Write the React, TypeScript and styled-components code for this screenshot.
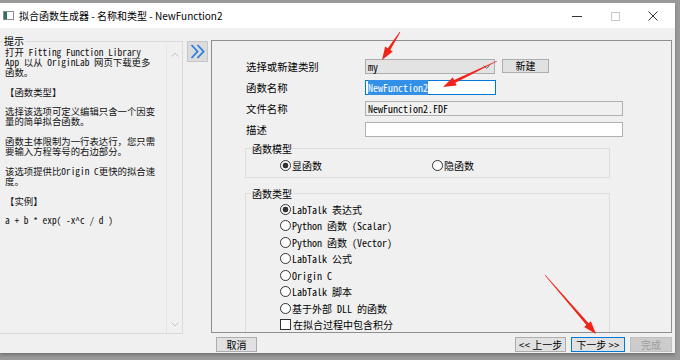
import styled, { createGlobalStyle } from 'styled-components';

const MONO = `"Noto Sans Mono CJK SC", "Liberation Mono", "Noto Sans CJK SC", monospace`;
const UI = `"Noto Sans CJK SC", "Liberation Sans", sans-serif`;

const GlobalStyle = createGlobalStyle`
  html, body { margin: 0; padding: 0; }
  body { width: 680px; height: 360px; overflow: hidden; background: #9a9a9a; }
`;

const helpLines = [
  '打开 Fitting Function Library',
  'App 以从 OriginLab 网页下载更多',
  '函数。',
  '',
  '【函数类型】',
  '',
  '选择该选项可定义编辑只含一个因变',
  '量的简单拟合函数。',
  '',
  '函数主体限制为一行表达行，您只需',
  '要输入方程等号的右边部分。',
  '',
  '该选项提供比Origin C更快的拟合速',
  '度。',
  '',
  '【实例】',
  '',
  'a + b * exp( -x^c / d )',
];

const funcTypes = [
  'LabTalk 表达式',
  'Python 函数 (Scalar)',
  'Python 函数 (Vector)',
  'LabTalk 公式',
  'Origin C',
  'LabTalk 脚本',
  '基于外部 DLL 的函数',
];

// red annotation arrows drawn over the dialog
const arrows = [
  { x1: 400, y1: 32, x2: 382, y2: 60 },
  { x1: 497, y1: 61, x2: 443, y2: 87 },
  { x1: 545, y1: 275, x2: 596, y2: 334 },
];

const arrowPoints = (x1: number, y1: number, x2: number, y2: number) => {
  const dx = x2 - x1;
  const dy = y2 - y1;
  const len = Math.hypot(dx, dy);
  const ux = dx / len;
  const uy = dy / len;
  const nx = -uy;
  const ny = ux;
  const head = 13;
  const hw = 4.5;
  const sw = 1.5;
  const bx = x2 - ux * head;
  const by = y2 - uy * head;
  const pts = [
    [x1 + nx * 0.3, y1 + ny * 0.3],
    [bx + nx * sw, by + ny * sw],
    [bx + nx * hw, by + ny * hw],
    [x2, y2],
    [bx - nx * hw, by - ny * hw],
    [bx - nx * sw, by - ny * sw],
    [x1 - nx * 0.3, y1 - ny * 0.3],
  ];
  return pts.map(p => p.map(v => v.toFixed(1)).join(',')).join(' ');
};

export default function App() {
  return (
    <Page>
      <GlobalStyle />
      <Window>
        <TitleBar>
          <svg width="11" height="9" viewBox="0 0 11 9" style={{ marginRight: 5 }}>
            <rect x="0.5" y="0.5" width="10" height="8" fill="#fff" stroke="#8a8a8a" />
            <rect x="1" y="1" width="3" height="7" fill="#2f6f6a" />
          </svg>
          <TitleText>拟合函数生成器 - 名称和类型 - NewFunction2</TitleText>
          <ControlButton>
            <svg width="10" height="10" viewBox="0 0 10 10">
              <line x1="0" y1="5.5" x2="10" y2="5.5" stroke="#333" strokeWidth="1" />
            </svg>
          </ControlButton>
          <ControlButton>
            <svg width="10" height="10" viewBox="0 0 10 10">
              <rect x="1.5" y="1.5" width="8" height="8" fill="none" stroke="#c8c8c8" strokeWidth="1" />
            </svg>
          </ControlButton>
          <ControlButton>
            <svg width="10" height="10" viewBox="0 0 10 10">
              <path d="M0.5 0.5 L9.5 9.5 M9.5 0.5 L0.5 9.5" stroke="#333" strokeWidth="1" />
            </svg>
          </ControlButton>
        </TitleBar>
        <Body>
          <Main>
            <HelpBox>
              <HelpLegend>提示</HelpLegend>
              <HelpInner>
                <HelpText>
                  {helpLines.map((l, i) => <HelpLine key={i}>{l || '\u00a0'}</HelpLine>)}
                </HelpText>
                <ScrollTrack>
                  <svg width="8" height="5" viewBox="0 0 8 5">
                    <path d="M0.5 4.5 L4 1 L7.5 4.5" fill="none" stroke="#c4c4c4" />
                  </svg>
                  <svg width="8" height="5" viewBox="0 0 8 5">
                    <path d="M0.5 0.5 L4 4 L7.5 0.5" fill="none" stroke="#c4c4c4" />
                  </svg>
                </ScrollTrack>
              </HelpInner>
            </HelpBox>
            <ExpandButton>
              <svg width="17" height="17" viewBox="0 0 17 17">
                <path d="M2.5 2 L8.5 8.5 L2.5 15 M8.5 2 L14.5 8.5 L8.5 15" fill="none" stroke="#2b7de0" strokeWidth="1.8" />
              </svg>
            </ExpandButton>
            <Panel>
              <FormGrid>
                <FieldLabel>选择或新建类别</FieldLabel>
                <FieldRow>
                  <Combo>
                    <span>my</span>
                    <svg width="7" height="4" viewBox="0 0 7 4">
                      <path d="M0.5 0.5 L3.5 3.5 L6.5 0.5" fill="none" stroke="#666" />
                    </svg>
                  </Combo>
                  <SmallButton>新建</SmallButton>
                </FieldRow>
                <FieldLabel>函数名称</FieldLabel>
                <TextBox $width={131} $focused>
                  <Selected>NewFunction2</Selected>
                </TextBox>
                <FieldLabel>文件名称</FieldLabel>
                <TextBox $width={258} $readonly>NewFunction2.FDF</TextBox>
                <FieldLabel>描述</FieldLabel>
                <TextBox $width={258} />
              </FormGrid>

              <Group $gap={6}>
                <GroupLegend>函数模型</GroupLegend>
                <ModelRow>
                  <Option $width={152}>
                    <Radio $checked />
                    <OptionText>显函数</OptionText>
                  </Option>
                  <Option>
                    <Radio />
                    <OptionText>隐函数</OptionText>
                  </Option>
                </ModelRow>
              </Group>

              <Group $gap={10} $height={160}>
                <GroupLegend>函数类型</GroupLegend>
                <TypeList>
                  {funcTypes.map((t, i) => (
                    <Option key={t} $height={16.5}>
                      <Radio $checked={i === 0} />
                      <OptionText>{t}</OptionText>
                    </Option>
                  ))}
                  <Option $height={16.5}>
                    <Check />
                    <OptionText>在拟合过程中包含积分</OptionText>
                  </Option>
                </TypeList>
              </Group>
            </Panel>
          </Main>
          <Footer>
            <FooterButton $width={41}>取消</FooterButton>
            <Spacer />
            <FooterButton $width={51}>&lt;&lt; 上一步</FooterButton>
            <FooterButton $width={54} $primary>下一步 &gt;&gt;</FooterButton>
            <FooterButton $width={42} $disabled>完成</FooterButton>
          </Footer>
        </Body>
      </Window>
      <Overlay width="680" height="360" viewBox="0 0 680 360">
        {arrows.map((a, i) => (
          <polygon key={i} points={arrowPoints(a.x1, a.y1, a.x2, a.y2)} fill="#f1241b" />
        ))}
      </Overlay>
    </Page>
  );
}

const Page = styled.div`
  position: relative;
  width: 680px;
  height: 360px;
  overflow: hidden;
`;

const Window = styled.div`
  margin-top: 3px;
  width: 675px;
  height: 350px;
  background: #f0f0f0;
  display: flex;
  flex-direction: column;
  box-shadow: 0 2px 3px rgba(0, 0, 0, 0.25);
`;

const TitleBar = styled.div`
  height: 25px;
  flex: none;
  background: #fff;
  display: flex;
  align-items: center;
  padding: 0 3px 0 3px;
`;

const TitleText = styled.div`
  flex: 1;
  font-family: ${UI};
  font-size: 10px;
  color: #000;
  white-space: nowrap;
`;

const ControlButton = styled.div`
  width: 38px;
  height: 25px;
  display: flex;
  align-items: center;
  justify-content: center;
`;

const Body = styled.div`
  flex: 1;
  display: flex;
  flex-direction: column;
`;

const Main = styled.div`
  height: 305px;
  display: flex;
  align-items: flex-start;
`;

const HelpBox = styled.fieldset`
  margin: 8px 0 0 0;
  padding: 0;
  width: 183px;
  height: 298px;
  box-sizing: border-box;
  border: 1px solid #dadada;
  border-left: none;
  min-width: 0;
`;

const HelpLegend = styled.legend`
  margin-left: 3px;
  padding: 0 1px;
  font-family: ${MONO};
  font-size: 10px;
  line-height: 10px;
  color: #000;
`;

const HelpInner = styled.div`
  height: 287px;
  display: flex;
`;

const HelpText = styled.div`
  flex: 1;
  min-width: 0;
  padding: 2px 0 0 5px;
  font-family: ${MONO};
  font-size: 9.4px;
  color: #111;
  white-space: pre;
`;

const HelpLine = styled.div`
  line-height: 9.9px;
`;

const ScrollTrack = styled.div`
  width: 15px;
  border-left: 1px solid #e4e4e4;
  display: flex;
  flex-direction: column;
  justify-content: space-between;
  align-items: center;
  padding: 6px 0 6px;
`;

const ExpandButton = styled.div`
  margin: 13px 0 0 4px;
  width: 21px;
  height: 21px;
  box-sizing: border-box;
  background: #dcdcdc;
  border: 1px solid #c6c6c6;
  display: flex;
  align-items: center;
  justify-content: center;
`;

const Panel = styled.div`
  margin: 12px 0 0 3px;
  width: 461px;
  height: 293px;
  box-sizing: border-box;
  border: 1px solid #8e8e8e;
  padding: 18px 0 0 33px;
  overflow: hidden;
`;

const FormGrid = styled.div`
  display: grid;
  grid-template-columns: 120px 1fr;
  row-gap: 6px;
  align-items: center;
`;

const FieldLabel = styled.div`
  padding-left: 1px;
  font-family: ${MONO};
  font-size: 10.4px;
  line-height: 15px;
  color: #000;
`;

const FieldRow = styled.div`
  display: flex;
  gap: 7px;
`;

const Combo = styled.div`
  width: 130px;
  height: 15px;
  box-sizing: border-box;
  border: 1px solid #adadad;
  background: #e3e3e3;
  padding: 0 4px 0 2px;
  display: flex;
  align-items: center;
  justify-content: space-between;
  font-family: ${MONO};
  font-size: 10px;
  color: #000;
`;

const SmallButton = styled.div`
  width: 47px;
  height: 14px;
  box-sizing: border-box;
  border: 1px solid #adadad;
  background: #e1e1e1;
  font-family: ${UI};
  font-size: 10px;
  line-height: 12px;
  text-align: center;
  color: #000;
`;

const TextBox = styled.div<{ $width: number; $focused?: boolean; $readonly?: boolean }>`
  width: ${p => p.$width}px;
  height: 15px;
  box-sizing: border-box;
  border: 1px solid ${p => (p.$focused ? '#0078d7' : '#b0b0b0')};
  background: ${p => (p.$readonly ? '#f0f0f0' : '#fff')};
  padding-left: 2px;
  font-family: ${MONO};
  font-size: 10px;
  line-height: 13px;
  color: #000;
  white-space: nowrap;
`;

const Selected = styled.span`
  background: #3390e8;
  color: #fff;
`;

const Group = styled.fieldset<{ $gap: number; $height?: number }>`
  margin: ${p => p.$gap}px 0 0 0;
  width: 365px;
  ${p => (p.$height ? `height: ${p.$height}px;` : '')}
  box-sizing: border-box;
  border: 1px solid #dcdcdc;
  padding: 0 0 0 5px;
  min-width: 0;
`;

const GroupLegend = styled.legend`
  padding: 0 1px;
  font-family: ${MONO};
  font-size: 10px;
  line-height: 11px;
  color: #000;
`;

const ModelRow = styled.div`
  display: flex;
  padding: 4px 0 5px 29px;
`;

const TypeList = styled.div`
  display: flex;
  flex-direction: column;
  padding: 2px 0 0 29px;
`;

const Option = styled.div<{ $width?: number; $height?: number }>`
  display: flex;
  align-items: center;
  height: ${p => p.$height ?? 14}px;
  ${p => (p.$width ? `width: ${p.$width}px;` : '')}
`;

const Radio = styled.span<{ $checked?: boolean }>`
  width: 11px;
  height: 11px;
  box-sizing: border-box;
  border-radius: 50%;
  border: 1px solid #333;
  background: ${p => (p.$checked ? 'radial-gradient(circle, #333 0 2.6px, #fff 3.2px)' : '#fff')};
  margin-right: 1px;
  flex: none;
`;

const Check = styled.span`
  width: 11px;
  height: 11px;
  box-sizing: border-box;
  border: 1px solid #333;
  background: #fff;
  margin-right: 2px;
  flex: none;
`;

const OptionText = styled.span`
  font-family: ${MONO};
  font-size: 10px;
  color: #000;
  white-space: nowrap;
`;

const Footer = styled.div`
  flex: 1;
  display: flex;
  align-items: flex-start;
  padding: 4px 3px 0 216px;
  gap: 10px;
`;

const Spacer = styled.div`
  flex: 1;
`;

const FooterButton = styled.div<{ $width: number; $primary?: boolean; $disabled?: boolean }>`
  width: ${p => p.$width}px;
  height: 15px;
  box-sizing: border-box;
  border: 1px solid ${p => (p.$primary ? '#0078d7' : p.$disabled ? '#bfbfbf' : '#adadad')};
  background: ${p => (p.$disabled ? '#cccccc' : '#e1e1e1')};
  color: ${p => (p.$disabled ? '#9c9c9c' : '#000')};
  font-family: ${UI};
  font-size: 10px;
  line-height: 13px;
  text-align: center;
  white-space: nowrap;
  & + & { margin-left: -5px; }
`;

const Overlay = styled.svg`
  position: absolute;
  left: 0;
  top: 0;
  pointer-events: none;
`;
